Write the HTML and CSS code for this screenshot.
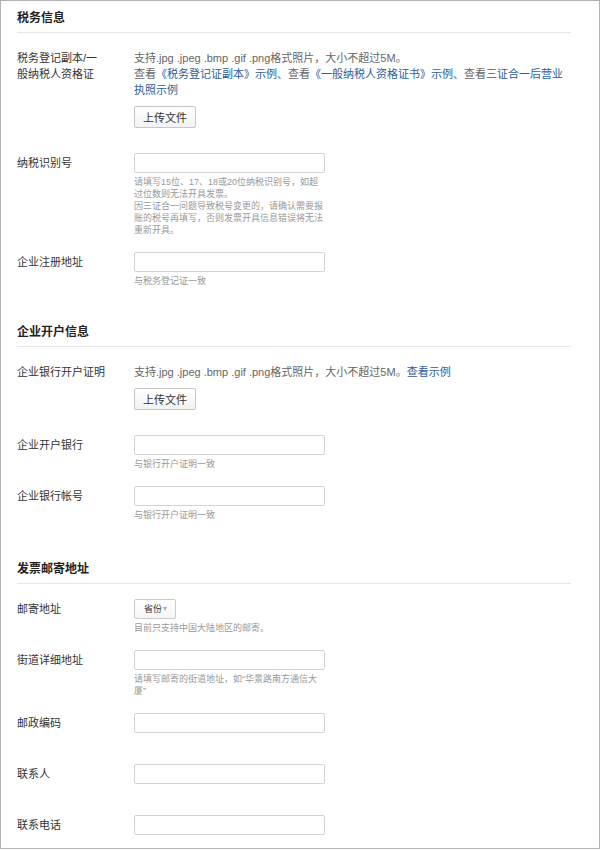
FILE: index.html
```html
<!DOCTYPE html>
<html lang="zh-CN">
<head>
  <meta charset="UTF-8" />
  <meta name="viewport" content="width=device-width, initial-scale=1.0"/>
  <title>发票信息</title>
  <link rel="stylesheet" href="styles.css">
</head>
<body>

<div class="page">

  <!-- 税务信息 -->
  <div class="section">
    <h2 class="section-title">税务信息</h2>
    <div class="form-list">
      <div class="form-row">
        <div class="form-label form-label-text">税务登记副本/一般纳税人资格证</div>
        <div class="form-field">
          <p class="upload-tip">支持.jpg .jpeg .bmp .gif .png格式照片，大小不超过5M。<br>查看<a href="#">《税务登记证副本》示例</a>、查看<a href="#">《一般纳税人资格证书》示例</a>、查看<a href="#">三证合一后营业执照示例</a></p>
          <button class="btn" type="button">上传文件</button>
        </div>
      </div>
      <div class="form-row">
        <div class="form-label">纳税识别号</div>
        <div class="form-field">
          <input class="text-input" type="text">
          <p class="hint">请填写15位、17、18或20位纳税识别号，如超过位数则无法开具发票。<br>因三证合一问题导致税号变更的，请确认需要报账的税号再填写，否则发票开具信息错误将无法重新开具。</p>
        </div>
      </div>
      <div class="form-row">
        <div class="form-label">企业注册地址</div>
        <div class="form-field">
          <input class="text-input" type="text">
          <p class="hint">与税务登记证一致</p>
        </div>
      </div>
    </div>
  </div>

  <!-- 企业开户信息 -->
  <div class="section">
    <h2 class="section-title">企业开户信息</h2>
    <div class="form-list">
      <div class="form-row">
        <div class="form-label form-label-text">企业银行开户证明</div>
        <div class="form-field">
          <p class="upload-tip">支持.jpg .jpeg .bmp .gif .png格式照片，大小不超过5M。<a href="#">查看示例</a></p>
          <button class="btn" type="button">上传文件</button>
        </div>
      </div>
      <div class="form-row">
        <div class="form-label">企业开户银行</div>
        <div class="form-field">
          <input class="text-input" type="text">
          <p class="hint">与银行开户证明一致</p>
        </div>
      </div>
      <div class="form-row">
        <div class="form-label">企业银行帐号</div>
        <div class="form-field">
          <input class="text-input" type="text">
          <p class="hint">与银行开户证明一致</p>
        </div>
      </div>
    </div>
  </div>

  <!-- 发票邮寄地址 -->
  <div class="section section-address">
    <h2 class="section-title">发票邮寄地址</h2>
    <div class="form-list">
      <div class="form-row">
        <div class="form-label">邮寄地址</div>
        <div class="form-field">
          <div class="select-box">省份</div>
          <p class="hint">目前只支持中国大陆地区的邮寄。</p>
        </div>
      </div>
      <div class="form-row">
        <div class="form-label">街道详细地址</div>
        <div class="form-field">
          <input class="text-input" type="text">
          <p class="hint">请填写邮寄的街道地址，如“华景路南方通信大厦”</p>
        </div>
      </div>
      <div class="form-row">
        <div class="form-label">邮政编码</div>
        <div class="form-field">
          <input class="text-input" type="text">
          <p class="hint"></p>
        </div>
      </div>
      <div class="form-row">
        <div class="form-label">联系人</div>
        <div class="form-field">
          <input class="text-input" type="text">
          <p class="hint"></p>
        </div>
      </div>
      <div class="form-row">
        <div class="form-label">联系电话</div>
        <div class="form-field">
          <input class="text-input" type="text">
          <p class="hint"></p>
        </div>
      </div>
    </div>
  </div>

</div>

</body>
</html>
```

FILE: styles.css
```css
* {
  box-sizing: border-box;
}
body {
  margin: 0;
  background: #fff;
  font-family: "Liberation Sans", "Noto Sans CJK SC", sans-serif;
  color: #333;
}
.page {
  width: 600px;
  height: 849px;
  padding: 9px 28px 0 16px;
  border: 1px solid #b2b2b2;
  overflow: hidden;
}
/* ---------- sections ---------- */
.section + .section {
  margin-top: 37px;
}
.section-title {
  margin: 0;
  padding-bottom: 6px;
  border-bottom: 1px solid #e6e6e6;
  font-size: 12px;
  line-height: 16px;
  font-weight: bold;
  color: #222;
}
.form-list {
  padding-top: 17px;
}
.section-address { margin-top: 40px !important; }
.section-address .form-list { padding-top: 15px; }
/* ---------- rows ---------- */
.form-row {
  display: flex;
  margin-bottom: 16px;
}
.form-label {
  width: 90px;
  margin-right: 27px;
  font-size: 11px;
  line-height: 20px;
}
.form-label-text { line-height: 16px; }
.form-field {
  flex: 1;
}
.upload-tip {
  margin: 0;
  font-size: 11px;
  line-height: 16px;
  color: #666;
}
.upload-tip a {
  color: #2c5d9a;
  text-decoration: none;
}
.btn {
  display: block;
  width: 62px;
  height: 22px;
  margin: 8px 0 9px;
  padding: 0;
  border: 1px solid #c6c6c6;
  border-radius: 2px;
  background: linear-gradient(#fff, #f2f2f2);
  font-family: inherit;
  font-size: 11px;
  color: #333;
}
.text-input {
  display: block;
  width: 191px;
  height: 20px;
  margin: 0;
  border: 1px solid #d3d3d3;
  border-radius: 2px;
  background: #fff;
}
.select-box {
  position: relative;
  width: 42px;
  height: 20px;
  padding-left: 9px;
  border: 1px solid #cacaca;
  border-radius: 2px;
  background: linear-gradient(#fff, #f6f6f6);
  font-size: 9px;
  line-height: 18px;
  color: #333;
}
.select-box::after {
  content: "";
  position: absolute;
  right: 8px;
  top: 7px;
  border-left: 2.5px solid transparent;
  border-right: 2.5px solid transparent;
  border-top: 4px solid #aaa;
}
.hint {
  width: 191px;
  min-height: 12px;
  margin: 3px 0 0;
  font-size: 9px;
  line-height: 12px;
  color: #999;
}
```
